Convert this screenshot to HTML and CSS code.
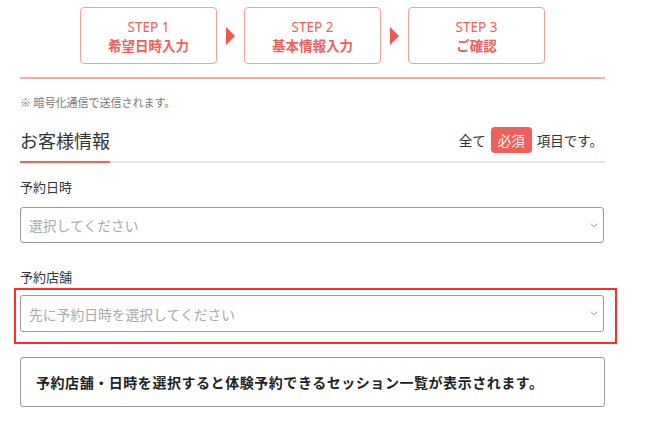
FILE: index.html
```html
<!DOCTYPE html>
<html lang="ja">
<head>
    <meta charset="UTF-8">
    <meta name="viewport" content="width=device-width, initial-scale=1.0">
    <title>体験予約 - お客様情報</title>
    <link rel="stylesheet" href="styles.css">
</head>
<body>

<div class="page">

    <!-- ステップ表示 -->
    <div class="steps">
        <div class="step">
            <span class="step-num">STEP 1</span>
            <span class="step-name">希望日時入力</span>
        </div>
        <span class="step-arrow"></span>
        <div class="step">
            <span class="step-num">STEP 2</span>
            <span class="step-name">基本情報入力</span>
        </div>
        <span class="step-arrow"></span>
        <div class="step">
            <span class="step-num">STEP 3</span>
            <span class="step-name">ご確認</span>
        </div>
    </div>

    <p class="note">※ 暗号化通信で送信されます。</p>

    <div class="section-head">
        <h2>お客様情報</h2>
        <p class="required-note">全て <span class="badge">必須</span> 項目です。</p>
    </div>

    <div class="field">
        <label class="field-label">予約日時</label>
        <div class="select">
            <span class="placeholder">選択してください</span>
            <svg class="chevron" width="8" height="5" viewBox="0 0 8 5"><polyline points="0.5,0.5 4,4 7.5,0.5" fill="none" stroke="#b5b5b5" stroke-width="1"/></svg>
        </div>
    </div>

    <div class="field">
        <label class="field-label">予約店舗</label>
        <div class="highlight">
            <div class="select">
                <span class="placeholder">先に予約日時を選択してください</span>
                <svg class="chevron" width="8" height="5" viewBox="0 0 8 5"><polyline points="0.5,0.5 4,4 7.5,0.5" fill="none" stroke="#b5b5b5" stroke-width="1"/></svg>
            </div>
        </div>
    </div>

    <div class="info-box">
        予約店舗・日時を選択すると体験予約できるセッション一覧が表示されます。
    </div>

</div>

</body>
</html>
```

FILE: styles.css
```css
body {
    font-family: "Noto Sans CJK JP", "Noto Sans", sans-serif;
    margin: 0;
    padding: 0;
    background-color: #fff;
    color: #333;
}

.page {
    width: 585px;
    margin-left: 20px;
}

/* ステップ */
.steps {
    display: flex;
    justify-content: center;
    align-items: center;
    padding-top: 7px;
    padding-bottom: 13px;
    border-bottom: 2px solid #f8aba6;
}

.step {
    width: 135px;
    height: 55px;
    border: 1px solid #f3a19c;
    border-radius: 4px;
    display: flex;
    flex-direction: column;
    align-items: center;
    justify-content: center;
    color: #f0605a;
    line-height: 18px;
}

.step-num {
    font-family: "Noto Sans", sans-serif;
    font-size: 13.5px;
}

.step-name {
    font-size: 13.5px;
    font-weight: bold;
}

.step-arrow {
    width: 0;
    height: 0;
    margin: 0 9px;
    border-top: 9px solid transparent;
    border-bottom: 9px solid transparent;
    border-left: 9px solid #f0554f;
}

.note {
    font-size: 11px;
    color: #777;
    margin: 16px 0 0;
    line-height: 14px;
}

/* 見出し */
.section-head {
    display: flex;
    justify-content: space-between;
    align-items: center;
    height: 42px;
    padding-top: 4px;
    margin-top: 6px;
    border-bottom: 2px solid #e6e6e6;
    position: relative;
}

.section-head::after {
    content: '';
    position: absolute;
    left: 0;
    bottom: -2px;
    width: 90px;
    height: 2px;
    background: #f0625a;
}

.section-head h2 {
    font-size: 18px;
    font-weight: normal;
    margin: 0;
}

.required-note {
    font-size: 13.5px;
    margin: 0 2px 0 0;
    display: flex;
    align-items: center;
    gap: 5px;
}

.badge {
    background-color: #f0605a;
    color: #fff;
    font-size: 13.5px;
    border-radius: 4px;
    padding: 0 7px;
    line-height: 26px;
}

/* フォーム */
.field {
    margin-top: 15px;
}

.field-label {
    display: block;
    font-size: 13px;
    line-height: 18px;
    margin-bottom: 11px;
}

.field + .field {
    margin-top: 25px;
}

.field + .field .field-label {
    margin-bottom: 2px;
}

.select {
    width: 584px;
    height: 36px;
    border: 1px solid #9a9a9a;
    border-radius: 3px;
    display: flex;
    align-items: center;
    justify-content: space-between;
    padding: 0 5px 0 8px;
    box-sizing: border-box;
}

.placeholder {
    font-size: 13.8px;
    color: #aaa;
}

.highlight {
    border: 2px solid #ff2d2d;
    margin-left: -6px;
    width: 595px;
    padding: 5px 0 10px 4px;
}

.highlight .select {
    height: 37px;
}

.info-box {
    margin-top: 13px;
    border: 1px solid #9a9a9a;
    border-radius: 3px;
    height: 50px;
    box-sizing: border-box;
    display: flex;
    align-items: center;
    padding-left: 15px;
    font-size: 14px;
    font-weight: bold;
    letter-spacing: 0.55px;
    color: #222;
}
```
